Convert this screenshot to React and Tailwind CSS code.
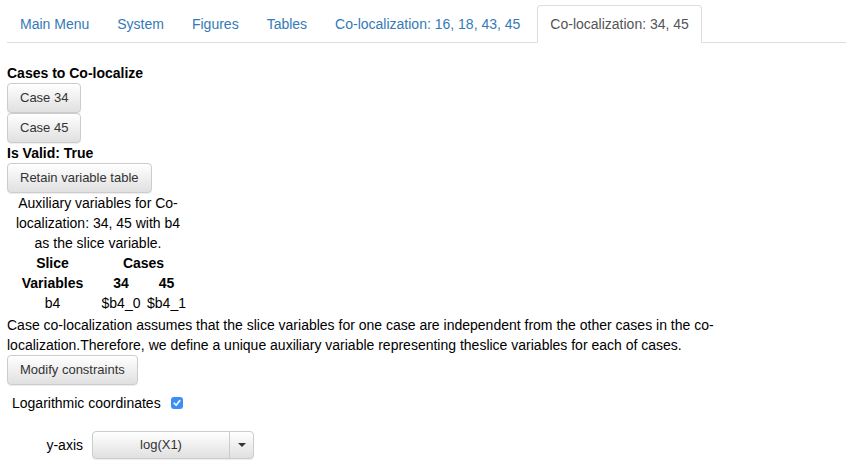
import React from 'react';

const tabs = ['Main Menu', 'System', 'Figures', 'Tables', 'Co-localization: 16, 18, 43, 45'];

function Btn({ children, className = '' }) {
  return (
    <button
      type="button"
      className={`block h-[30px] px-[12px] text-[13px] leading-[18px] text-[#333] border border-[#ccc] rounded-[4px] bg-linear-to-b from-white to-[#e0e0e0] shadow-[0_1px_1px_rgba(0,0,0,0.075)] ${className}`}
    >
      {children}
    </button>
  );
}

export default function App() {
  return (
    <div
      className="w-[851px] h-[465px] overflow-hidden bg-white pl-[7px] pr-[5px] text-[14px] leading-5 text-[#333]"
      style={{ fontFamily: '"Liberation Sans", Arial, sans-serif' }}
    >
      {/* tabs */}
      <ul className="flex mt-[5px] border-b border-[#ddd]">
        {tabs.map((t) => (
          <li key={t} className="-mb-px mr-[2px]">
            <a className="block px-3 py-2 border border-transparent rounded-t-[4px] text-[#337ab7]">{t}</a>
          </li>
        ))}
        <li className="-mb-px ml-[2px]">
          <a className="block px-3 py-2 border border-[#ddd] border-b-transparent rounded-t-[4px] bg-white text-[#555]">
            Co-localization: 34, 45
          </a>
        </li>
      </ul>

      <div className="pt-5">
        <div className="font-bold text-black">Cases to Co-localize</div>
        <Btn>Case 34</Btn>
        <Btn>Case 45</Btn>
        <div className="font-bold text-black">Is Valid: True</div>
        <Btn>Retain variable table</Btn>

        <table className="table-fixed w-[182px] border-collapse mb-[2px] text-black">
          <caption className="caption-top text-center">
            Auxiliary variables for Co-localization: 34, 45 with b4 as the slice variable.
          </caption>
          <colgroup>
            <col className="w-[91px]" />
            <col className="w-[46px]" />
            <col className="w-[45px]" />
          </colgroup>
          <thead>
            <tr>
              <th className="p-0 text-center">Slice</th>
              <th colSpan={2} className="p-0 text-center">Cases</th>
            </tr>
            <tr>
              <th className="p-0 text-center">Variables</th>
              <th className="p-0 text-center">34</th>
              <th className="p-0 text-center">45</th>
            </tr>
          </thead>
          <tbody>
            <tr>
              <td className="p-0 text-center">b4</td>
              <td className="p-0 text-center">$b4_0</td>
              <td className="p-0 text-center">$b4_1</td>
            </tr>
          </tbody>
        </table>

        <p className="text-black">
          Case co-localization assumes that the slice variables for one case are independent from the other cases in the co-localization.Therefore, we define a unique auxiliary variable representing theslice variables for each of cases.
        </p>
        <Btn>Modify constraints</Btn>

        <div className="flex items-center mt-2 pl-[5px] text-black">
          <span>Logarithmic coordinates</span>
          <span className="ml-[10px] w-[12px] h-[12px] rounded-[3px] bg-[#3a8ef6] flex items-center justify-center">
            <svg width="8" height="8" viewBox="0 0 8 8">
              <path d="M1.2 4.2 L3.2 6.2 L6.8 1.6" fill="none" stroke="white" strokeWidth="1.6" strokeLinecap="round" strokeLinejoin="round" />
            </svg>
          </span>
        </div>

        <div className="flex items-center mt-[18px]">
          <label className="w-[76px] text-right text-black">y-axis</label>
          <div className="ml-[9px] flex h-[28px] w-[162px] border border-[#ccc] rounded-[4px] bg-linear-to-b from-white to-[#e0e0e0] shadow-[0_1px_1px_rgba(0,0,0,0.075)] text-[13px] text-[#333]">
            <div className="flex-1 flex items-center justify-center">log(X1)</div>
            <div className="w-[24px] border-l border-[#ccc] flex items-center justify-center">
              <svg width="8" height="4" viewBox="0 0 8 4">
                <path d="M0 0 H8 L4 4 Z" fill="#333" />
              </svg>
            </div>
          </div>
        </div>
      </div>
    </div>
  );
}
